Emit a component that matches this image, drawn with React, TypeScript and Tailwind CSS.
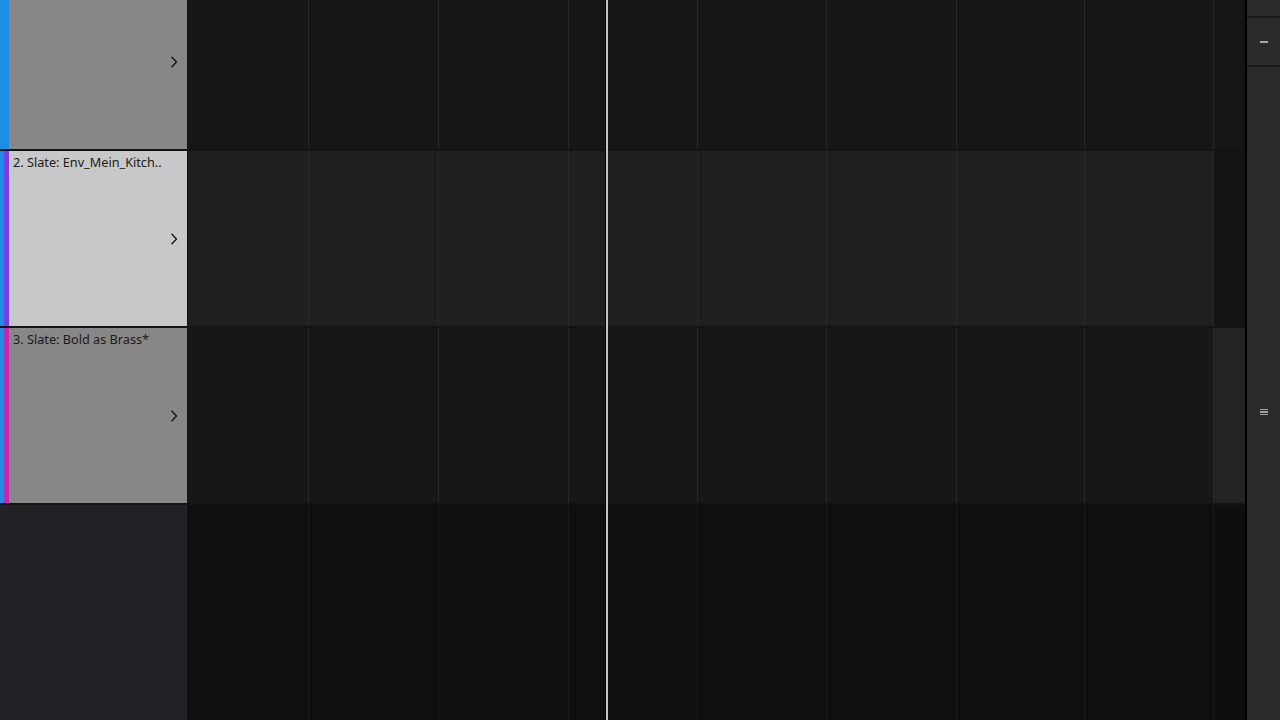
import React from "react";

type Track = {
  name: string;
  strip: string;
  header: string;
  lane: string;
  line: string;
  gutter: string;
  offset?: boolean;
};

const tracks: Track[] = [
  { name: "", strip: "bg-[#1c8ee6]", header: "bg-[#878787]", lane: "bg-[#161616]", line: "border-[#282828]", gutter: "bg-[#161616]", offset: true },
  { name: "2. Slate: Env_Mein_Kitch..", strip: "bg-[#7a3ee0]", header: "bg-[#c8c8c8]", lane: "bg-[#1f1f1f]", line: "border-[#2b2b2b]", gutter: "bg-[#141414]" },
  { name: "3. Slate: Bold as Brass*", strip: "bg-[#c02bb2]", header: "bg-[#878787]", lane: "bg-[#171717]", line: "border-[#282828]", gutter: "bg-[#232323]" },
];

const bars = [121, 130, 130, 129, 129, 130, 128, 129];

function Chevron() {
  return (
    <svg width="8" height="14" viewBox="0 0 8 14" className="shrink-0">
      <path d="M1.5 1.8 L6.5 7 L1.5 12.2" fill="none" stroke="#111" strokeWidth="1.3" />
    </svg>
  );
}

function Lane({ bg, line }: { bg: string; line: string }) {
  return (
    <div className={`flex h-full ${bg}`}>
      {bars.map((w, i) => (
        <div key={i} className={`h-full border-r ${line}`} style={{ width: w }} />
      ))}
    </div>
  );
}

function TrackRow({ t }: { t: Track }) {
  return (
    <div className={`flex shrink-0 ${t.offset ? "-mt-[26px] h-[175px]" : "h-[177px] border-t-2 border-[#131313]"}`}>
      <div className="flex w-[188px] shrink-0">
        <div className="w-[4px] bg-[#1c8ee6]" />
        <div className={`w-[5px] ${t.offset ? "bg-[#1c8ee6]" : t.strip}`} />
        <div className={`flex flex-1 flex-col border-r border-[#141414] ${t.header}`}>
          <div className="h-[22px] truncate pl-[4px] pt-[3px] text-[12.7px] leading-[17px] text-[#1b1b1b] [font-family:'Noto_Sans',sans-serif]">
            {t.name}
          </div>
          <div className="flex flex-1 items-center justify-end pb-[22px] pr-[9px]">
            <Chevron />
          </div>
        </div>
      </div>
      <Lane bg={t.lane} line={t.line} />
      <div className={`w-[31px] shrink-0 ${t.gutter}`} />
    </div>
  );
}

export default function App() {
  return (
    <div className="relative flex h-[720px] w-[1280px] overflow-hidden bg-[#0f0f0f]">
      <div className="flex w-[1245px] flex-col">
        {tracks.map((t, i) => (
          <TrackRow key={i} t={t} />
        ))}
        <div className="flex flex-1 border-t-2 border-[#131313]">
          <div className="w-[188px] shrink-0 border-r border-[#111] bg-[#222226]" />
          <Lane bg="bg-[#0f0f0f]" line="border-[#1c1c1c]" />
          <div className="w-[31px] shrink-0 bg-[#0e0e0e]" />
        </div>
      </div>

      <div className="w-[2px] shrink-0 bg-black" />

      <div className="flex flex-1 flex-col bg-[#2b2b2b]">
        <div className="h-[18px] border-b-2 border-[#1a1a1a]" />
        <div className="flex h-[49px] items-center justify-center border-b-2 border-[#1a1a1a]">
          <div className="h-[2px] w-[8px] bg-[#a8a8a8]" />
        </div>
        <div className="flex flex-1 items-center justify-center pt-[37px]">
          <div className="flex flex-col gap-[1px]">
            <div className="h-[1.5px] w-[8px] bg-[#a0a0a0]" />
            <div className="h-[1.5px] w-[8px] bg-[#a0a0a0]" />
            <div className="h-[1.5px] w-[8px] bg-[#a0a0a0]" />
          </div>
        </div>
      </div>

      {/* playhead */}
      <div className="absolute left-[605px] top-0 flex h-full">
        <div className="w-[1px] bg-black" />
        <div className="w-[2px] bg-[#c4c4c4]" />
      </div>
    </div>
  );
}
